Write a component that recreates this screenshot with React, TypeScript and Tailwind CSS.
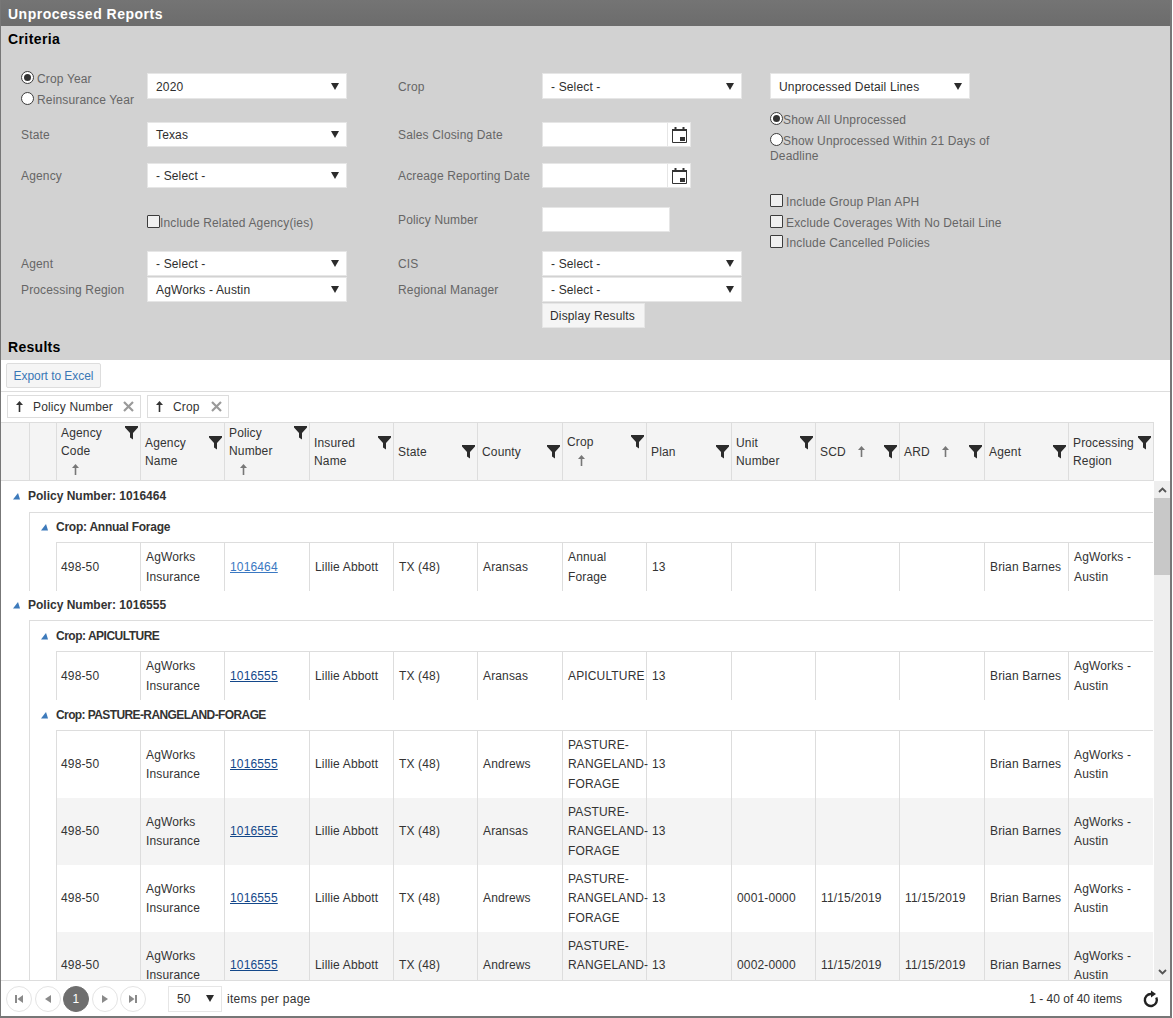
import type { ReactNode } from "react"

const COLS = [
  "w-[28px]", "w-[27px]", "w-[84px]", "w-[84px]", "w-[85px]", "w-[84px]", "w-[84px]", "w-[85px]",
  "w-[84px]", "w-[85px]", "w-[84px]", "w-[84px]", "w-[85px]", "w-[84px]", "w-[85px]",
]

type Head = { lines: string[]; sort?: "below" | "inline" }

const HEADERS: Head[] = [
  { lines: ["Agency", "Code"], sort: "below" },
  { lines: ["Agency", "Name"] },
  { lines: ["Policy", "Number"], sort: "below" },
  { lines: ["Insured", "Name"] },
  { lines: ["State"] },
  { lines: ["County"] },
  { lines: ["Crop"], sort: "below" },
  { lines: ["Plan"] },
  { lines: ["Unit", "Number"] },
  { lines: ["SCD"], sort: "inline" },
  { lines: ["ARD"], sort: "inline" },
  { lines: ["Agent"] },
  { lines: ["Processing", "Region"] },
]

type Row =
  | { kind: "policy"; label: string; h: string }
  | { kind: "crop"; label: string; h: string; line: boolean; track: string }
  | {
      kind: "data"
      h: string
      line?: boolean
      alt?: boolean
      link: string
      fresh?: boolean
      county: string
      crop: string
      unit?: string
      date?: string
    }

const ROWS: Row[] = [
  { kind: "policy", label: "Policy Number: 1016464", h: "h-[31px]" },
  { kind: "crop", label: "Crop: Annual Forage", h: "h-[30px]", line: true, track: "tracking-[-0.25px]" },
  { kind: "data", h: "h-[49px]", line: true, link: "1016464", fresh: true, county: "Aransas", crop: "Annual Forage" },
  { kind: "policy", label: "Policy Number: 1016555", h: "h-[29px]" },
  { kind: "crop", label: "Crop: APICULTURE", h: "h-[31px]", line: true, track: "tracking-[-0.5px]" },
  { kind: "data", h: "h-[49px]", line: true, link: "1016555", county: "Aransas", crop: "APICULTURE" },
  { kind: "crop", label: "Crop: PASTURE-RANGELAND-FORAGE", h: "h-[30px]", line: false, track: "tracking-[-0.6px]" },
  { kind: "data", h: "h-[68px]", line: true, link: "1016555", county: "Andrews", crop: "PASTURE-RANGELAND-FORAGE" },
  { kind: "data", h: "h-[67px]", alt: true, link: "1016555", county: "Aransas", crop: "PASTURE-RANGELAND-FORAGE" },
  { kind: "data", h: "h-[67px]", link: "1016555", county: "Andrews", crop: "PASTURE-RANGELAND-FORAGE", unit: "0001-0000", date: "11/15/2019" },
  { kind: "data", h: "h-[67px]", alt: true, link: "1016555", county: "Andrews", crop: "PASTURE-RANGELAND-FORAGE", unit: "0002-0000", date: "11/15/2019" },
]

function Caret() {
  return (
    <svg width="8" height="7" viewBox="0 0 8 7" className="shrink-0">
      <path d="M0 0H8L4 7Z" fill="#2b2b2b" />
    </svg>
  )
}

function Select({ value, w = "w-[200px]", h = "h-[25px]" }: { value: string; w?: string; h?: string }) {
  return (
    <div className={`${w} ${h} flex items-center justify-between border border-[#e6e6e6] bg-white pl-[8px] pr-[7px] text-[#2e2e2e]`}>
      <span>{value}</span>
      <Caret />
    </div>
  )
}

function Radio({ on }: { on?: boolean }) {
  return (
    <span className="-mt-[3px] flex h-[13px] w-[13px] shrink-0 items-center justify-center rounded-full border border-[#3c3c3c] bg-white">
      {on && <span className="h-[7px] w-[7px] rounded-full bg-[#333]" />}
    </span>
  )
}

function Check() {
  return <span className="-mt-[3px] block h-[13px] w-[13px] shrink-0 rounded-[1px] border border-[#3c3c3c] bg-[#f0f0f0]" />
}

function Label({ children }: { children: ReactNode }) {
  return <div className="flex h-[25px] items-center text-[#666]">{children}</div>
}

function CalendarIcon() {
  return (
    <svg width="15" height="16" viewBox="0 0 15 16">
      <path d="M0.5 2.5H14.5V15.5H0.5Z" fill="#fff" stroke="#333" />
      <path d="M0 2H15V4H0Z" fill="#333" />
      <path d="M3.5 0V3M11.5 0V3" stroke="#333" strokeWidth="2" />
      <path d="M8 10H13V14H8Z" fill="#333" />
    </svg>
  )
}

function DateField() {
  return (
    <div className="flex h-[25px] w-[149px] border border-[#e6e6e6] bg-white">
      <div className="flex-1" />
      <div className="flex w-[23px] items-center justify-center border-l border-[#e6e6e6] bg-white">
        <CalendarIcon />
      </div>
    </div>
  )
}

function Funnel() {
  return (
    <svg width="13" height="14" viewBox="0 0 13 14" className="mt-[2px] shrink-0">
      <path d="M0 0H13V1.5L8 7V13.5L5 11.5V7L0 1.5Z" fill="#2b2b2b" />
    </svg>
  )
}

function SortArrow({ color = "#777" }: { color?: string }) {
  return (
    <svg width="7" height="11" viewBox="0 0 7 11" className="block">
      <path d="M3.5 0L7 4H4.3V11H2.7V4H0Z" fill={color} />
    </svg>
  )
}

function Cross() {
  return (
    <svg width="11" height="11" viewBox="0 0 11 11">
      <path d="M1 1L10 10M10 1L1 10" stroke="#9a9a9a" strokeWidth="2.2" />
    </svg>
  )
}

function GroupArrow() {
  return (
    <svg width="7" height="7" viewBox="0 0 7 7" className="shrink-0">
      <path d="M5 0L7 6.5H0Z" fill="#3d7abb" />
    </svg>
  )
}

function Chip({ label, w, gap }: { label: string; w: string; gap: string }) {
  return (
    <div className={`${w} flex h-[23px] items-center border border-[#ddd] bg-white pl-[8px] text-[#333]`}>
      <SortArrow color="#333" />
      <span className="ml-[10px]">{label}</span>
      <span className={gap}>
        <Cross />
      </span>
    </div>
  )
}

function Colgroup() {
  return (
    <colgroup>
      {COLS.map((c, i) => (
        <col key={i} className={c} />
      ))}
    </colgroup>
  )
}

function HeaderCell({ head }: { head: Head }) {
  return (
    <th className="border-l border-[#ddd] pl-[4px] pr-[2px] text-left align-middle font-normal">
      <div className="flex items-start justify-between leading-[18px] text-[#333]">
        <div>
          {head.lines.map((l, i) => (
            <div key={l} className="flex items-center whitespace-nowrap">
              {l}
              {head.sort === "inline" && i === 0 && (
                <span className="ml-[12px]">
                  <SortArrow />
                </span>
              )}
            </div>
          ))}
          {head.sort === "below" && (
            <div className="flex h-[20px] items-center pl-[11px]">
              <SortArrow />
            </div>
          )}
        </div>
        <Funnel />
      </div>
    </th>
  )
}

function GroupTitle({ label, track = "tracking-normal" }: { label: string; track?: string }) {
  return (
    <div className={`flex items-center font-bold text-[#333] ${track}`}>
      <GroupArrow />
      <span className="ml-[8px]">{label}</span>
    </div>
  )
}

function BodyRow({ row }: { row: Row }) {
  if (row.kind === "policy") {
    return (
      <tr className={row.h}>
        <td colSpan={15} className="pl-[12px] align-middle">
          <GroupTitle label={row.label} />
        </td>
      </tr>
    )
  }
  if (row.kind === "crop") {
    return (
      <tr className={row.h}>
        <td />
        <td colSpan={14} className={`border-l border-[#ddd] pl-[11px] pt-[1px] align-middle ${row.line ? "border-t" : ""}`}>
          <GroupTitle label={row.label} track={row.track} />
        </td>
      </tr>
    )
  }
  const bg = row.alt ? "bg-[#f4f4f4]" : "bg-white"
  const cell = `border-l border-[#ddd] pr-[5px] pt-[1px] align-middle ${bg} ${row.line ? "border-t" : ""}`
  const values: ReactNode[] = [
    "498-50",
    "AgWorks Insurance",
    <a key="link" className={`underline ${row.fresh ? "text-[#3a78c2]" : "text-[#14488a]"}`}>
      {row.link}
    </a>,
    "Lillie Abbott",
    "TX (48)",
    row.county,
    row.crop,
    "13",
    row.unit ?? "",
    row.date ?? "",
    row.date ?? "",
    "Brian Barnes",
    "AgWorks - Austin",
  ]
  return (
    <tr className={row.h}>
      <td />
      <td className="border-l border-[#ddd]" />
      {values.map((v, i) => (
        <td key={i} className={`${cell} ${i === 0 ? "pl-[4px]" : "pl-[5px]"}`}>
          {v}
        </td>
      ))}
    </tr>
  )
}

function PagerButton({ children, active }: { children: ReactNode; active?: boolean }) {
  return (
    <div
      className={`flex h-[26px] w-[26px] items-center justify-center rounded-full border ${
        active ? "border-[#6e6e6e] bg-[#6e6e6e] text-white" : "border-[#e4e4e4] bg-white"
      }`}
    >
      {children}
    </div>
  )
}

function PagerIcon({ d }: { d: string }) {
  return (
    <svg width="10" height="10" viewBox="0 0 10 10">
      <path d={d} fill="#8a8a8a" />
    </svg>
  )
}

export default function App() {
  return (
    <div className="flex h-[1018px] w-[1172px] flex-col border-b-2 border-l border-r-2 border-[#777] bg-white font-['Liberation_Sans',Arial,sans-serif] text-[12px] tracking-[0.15px]">
      <div className="flex h-[26px] shrink-0 items-center bg-gradient-to-b from-[#747474] to-[#6c6c6c] pl-[7px] pt-[2px] text-[14px] font-bold tracking-[0.5px] text-white">
        Unprocessed Reports
      </div>

      {/* Criteria */}
      <section className="shrink-0 bg-[#d2d2d2]">
        <div className="flex h-[26px] items-center pl-[7px] text-[14px] font-bold tracking-[0.4px] text-black">Criteria</div>
        <div className="mt-[21px] flex pl-[20px]">
          <div className="grid grid-cols-[126px_251px_144px_228px] grid-rows-[49px_41px_44px_44px_26px_26px_25px] items-start">
            <div className="-mt-[5px] text-[#666]">
              <div className="flex h-[21px] items-center gap-[3px]">
                <Radio on />
                Crop Year
              </div>
              <div className="flex h-[21px] items-center gap-[3px]">
                <Radio />
                <span className="whitespace-nowrap">Reinsurance Year</span>
              </div>
            </div>
            <Select value="2020" h="h-[26px] pt-[1px]" />
            <div className="pt-[1px]">
              <Label>Crop</Label>
            </div>
            <Select value="- Select -" h="h-[26px] pt-[1px]" />

            <Label>State</Label>
            <Select value="Texas" />
            <Label>Sales Closing Date</Label>
            <DateField />

            <Label>Agency</Label>
            <Select value="- Select -" />
            <Label>Acreage Reporting Date</Label>
            <DateField />

            <div />
            <div className="mt-[7px] flex items-center text-[#666]">
              <Check />
              Include Related Agency(ies)
            </div>
            <Label>Policy Number</Label>
            <div className="h-[25px] w-[128px] border border-[#e6e6e6] bg-white" />

            <Label>Agent</Label>
            <Select value="- Select -" />
            <Label>CIS</Label>
            <Select value="- Select -" />

            <Label>Processing Region</Label>
            <Select value="AgWorks - Austin" />
            <Label>Regional Manager</Label>
            <Select value="- Select -" />

            <div />
            <div />
            <div />
            <div className="flex h-[25px] w-[103px] items-center border border-[#e6e6e6] bg-[#f5f5f5] pl-[7px] text-[#2e2e2e]">
              Display Results
            </div>
          </div>

          <div className="w-[260px] text-[#666]">
            <Select value="Unprocessed Detail Lines" h="h-[26px] pt-[1px]" />
            <div className="mt-[10px] flex h-[21px] items-center">
              <Radio on />
              Show All Unprocessed
            </div>
            <div className="flex h-[21px] items-center">
              <Radio />
              Show Unprocessed Within 21 Days of
            </div>
            <div className="-mt-[2px] leading-[15px]">Deadline</div>
            <div className="mt-[28px] flex h-[20px] items-center gap-[3px]">
              <Check />
              Include Group Plan APH
            </div>
            <div className="mt-[1px] flex h-[20px] items-center gap-[3px]">
              <Check />
              Exclude Coverages With No Detail Line
            </div>
            <div className="flex h-[20px] items-center gap-[3px]">
              <Check />
              Include Cancelled Policies
            </div>
          </div>
        </div>
        <div className="flex h-[32px] items-center pl-[7px] pt-[6px] text-[14px] font-bold tracking-[0.3px] text-black">Results</div>
      </section>

      {/* Results */}
      <div className="flex h-[32px] shrink-0 items-start border-b border-[#ddd] pl-[5px] pt-[3px]">
        <div className="flex h-[25px] w-[95px] items-center justify-center rounded-[2px] border border-[#ddd] bg-[#f5f5f5] tracking-[-0.05px] text-[#3a78b5]">
          Export to Excel
        </div>
      </div>
      <div className="flex h-[30px] shrink-0 gap-[6px] pl-[6px] pt-[3px]">
        <Chip label="Policy Number" w="w-[134px]" gap="ml-[10px]" />
        <Chip label="Crop" w="w-[82px]" gap="ml-[11px]" />
      </div>

      <div className="h-[59px] w-[1153px] shrink-0 border-b border-r border-t border-[#ddd]">
        <table className="h-full w-[1152px] table-fixed border-separate border-spacing-0">
          <Colgroup />
          <thead>
            <tr className="bg-[#f4f4f4]">
              <th />
              <th className="border-l border-[#ddd]" />
              {HEADERS.map((head) => (
                <HeaderCell key={head.lines.join(" ")} head={head} />
              ))}
            </tr>
          </thead>
        </table>
      </div>

      <div className="flex min-h-0 flex-1">
        <div className="h-full w-[1152px] overflow-hidden">
          <table className="w-[1152px] table-fixed border-separate border-spacing-0 leading-[19.33px] text-[#333]">
            <Colgroup />
            <tbody>
              {ROWS.map((row, i) => (
                <BodyRow key={i} row={row} />
              ))}
            </tbody>
          </table>
        </div>
        <div className="ml-[1px] flex h-full w-[16px] flex-col bg-[#eeeeee]">
          <div className="flex h-[17px] shrink-0 items-center justify-center">
            <svg width="9" height="6" viewBox="0 0 9 6">
              <path d="M1 5L4.5 1.5L8 5" fill="none" stroke="#555" strokeWidth="1.8" />
            </svg>
          </div>
          <div className="h-[77px] shrink-0 bg-[#c8c8c8]" />
          <div className="flex-1" />
          <div className="flex h-[17px] shrink-0 items-center justify-center">
            <svg width="9" height="6" viewBox="0 0 9 6">
              <path d="M1 1L4.5 4.5L8 1" fill="none" stroke="#555" strokeWidth="1.8" />
            </svg>
          </div>
        </div>
      </div>

      {/* Pager */}
      <div className="flex h-[36px] shrink-0 items-center border-t border-[#ddd] pl-[5px] pr-[11px] text-[#333]">
        <div className="flex gap-[2.5px]">
          <PagerButton>
            <PagerIcon d="M1 1H3V9H1ZM9 1V9L3.5 5Z" />
          </PagerButton>
          <PagerButton>
            <PagerIcon d="M8 1V9L2 5Z" />
          </PagerButton>
          <PagerButton active>1</PagerButton>
          <PagerButton>
            <PagerIcon d="M2 1V9L8 5Z" />
          </PagerButton>
          <PagerButton>
            <PagerIcon d="M1 1V9L6.5 5ZM7 1H9V9H7Z" />
          </PagerButton>
        </div>
        <Select value="50" w="ml-[22px] w-[54px]" h="h-[26px]" />
        <span className="ml-[5px] tracking-[0.3px]">items per page</span>
        <span className="ml-auto tracking-normal">1 - 40 of 40 items</span>
        <svg width="16" height="18" viewBox="0 0 16 18" className="ml-[21px]">
          <path d="M13.3 7.5A6 6 0 1 1 8 4" fill="none" stroke="#222" strokeWidth="2.4" />
          <path d="M8 0.5L13 4L8 7.5Z" fill="#222" />
        </svg>
      </div>
    </div>
  )
}
